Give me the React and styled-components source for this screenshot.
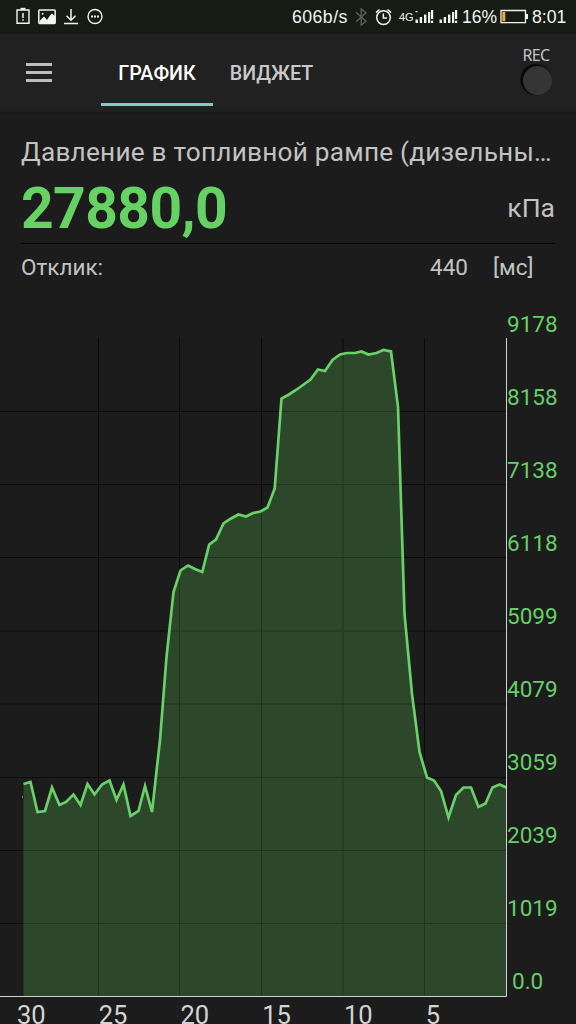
import React from "react";
import styled, { createGlobalStyle } from "styled-components";

const GlobalStyle = createGlobalStyle`
    * {
        box-sizing: border-box;
    }

    body {
        margin: 0;
        background: #1c1c1c;
        font-family: Roboto, "Noto Sans", sans-serif;
    }
`;

const Screen = styled.div`
    width: 576px;
    height: 1024px;
    overflow: hidden;
    display: flex;
    flex-direction: column;
    background: #1c1c1c;
`;

const StatusBar = styled.div`
    height: 34px;
    flex: none;
    display: flex;
    align-items: center;
    justify-content: space-between;
    padding: 0 9px 0 16px;
    background: #161c14;
`;

const StatusText = styled.span`
    width: ${(props) => props.$width}px;
    flex: none;
    font-family: "Liberation Sans", sans-serif;
    font-size: ${(props) => props.$size || 17}px;
    letter-spacing: ${(props) => props.$spacing || 0}px;
    line-height: 34px;
    white-space: nowrap;
    color: #f1f5ef;
`;

const StatusIcons = styled.svg`
    display: block;
    flex: none;
`;

const StatusGroup = styled.div`
    display: flex;
    align-items: center;
`;

const Header = styled.header`
    height: 78px;
    flex: none;
    display: flex;
    background: #212121;
    border-bottom: 1px solid #1e1e1e;
    box-shadow: 0 1px 3px #151515;
`;

const MenuButton = styled.button`
    width: 101px;
    border: 0;
    padding: 29px 0 0 26px;
    background: none;
    display: flex;
    flex-direction: column;
    gap: 5px;
`;

const MenuLine = styled.span`
    width: 26px;
    height: 3px;
    background: #bdbdbd;
`;

const Tab = styled.div`
    width: ${(props) => props.$width}px;
    height: 72px;
    padding-top: 2px;
    line-height: 75px;
    text-align: center;
    font-size: 19.7px;
    font-weight: 500;
    white-space: nowrap;
    color: ${(props) => (props.$active ? "#fff" : "#c9c9c9")};
    border-bottom: 3px solid ${(props) => (props.$active ? "#80cbc4" : "transparent")};
`;

const Record = styled.div`
    margin-left: auto;
    width: 80px;
    padding-top: 13px;
    display: flex;
    flex-direction: column;
    align-items: center;
`;

const RecordLabel = styled.span`
    font-family: "Noto Sans", sans-serif;
    font-size: 16px;
    line-height: 17px;
    letter-spacing: -0.7px;
    color: #c4c4c4;
`;

const RecordLamp = styled.span`
    width: 29px;
    height: 29px;
    margin: 2px 0 0 2px;
    border-radius: 50%;
    background: #353535;
    box-shadow: -1.5px -1px 1px 1px #070707;
`;

const Summary = styled.section`
    height: 226px;
    flex: none;
    padding: 22px 20px 0 21px;
    color: #c3c3c3;
`;

const Title = styled.div`
    height: 36px;
    font-size: 26.2px;
    line-height: 36px;
    letter-spacing: 0.23px;
    white-space: nowrap;
`;

const ValueRow = styled.div`
    height: 74px;
    margin-right: 1px;
    display: flex;
    justify-content: space-between;
    border-bottom: 1px solid #020202;
`;

const Value = styled.span`
    font-size: 57px;
    font-weight: 700;
    line-height: 78px;
    letter-spacing: -0.6px;
    color: #66d264;
`;

const Unit = styled.span`
    font-size: 26.5px;
    line-height: 75px;
`;

const ResponseRow = styled.div`
    display: grid;
    grid-template-columns: 409px 63px 1fr;
    font-size: 22.5px;
    line-height: 47px;
`;

const Chart = styled.section`
    display: grid;
    grid-template-columns: 507px 69px;
    grid-template-rows: 659px 27px;
`;

const Plot = styled.svg`
    display: block;
`;

const ValueAxis = styled.div`
    margin-top: -28px;
    display: flex;
    flex-direction: column;
`;

const ValueTick = styled.span`
    height: 73px;
    flex: none;
    padding-left: ${(props) => (props.$zero ? 5 : 0)}px;
    font-size: 22.5px;
    line-height: 28px;
    color: #66cf67;
`;

const TimeAxis = styled.div`
    display: flex;
    padding-left: 17px;
    height: 27px;
`;

const TimeTick = styled.span`
    width: 81.75px;
    flex: none;
    font-size: 25.5px;
    line-height: 36px;
    color: #d4d4d4;
`;

const points = [
    [23.5, 784], [30.5, 782], [37.5, 812], [45, 811], [52, 787.5],
    [59.5, 805], [66, 802], [73.5, 794.5], [80.5, 805], [87.5, 784],
    [94.5, 794.5], [102, 784.5], [109.5, 780.5], [116.5, 800], [123.5, 784.5],
    [130.5, 816], [138.5, 811], [145, 786], [152, 812], [160, 740],
    [166.5, 657], [173.5, 592], [180.5, 570.5], [188, 565.5], [195, 569],
    [202.3, 572], [209.2, 544.5], [216, 539.5], [223.5, 523.5], [231, 518.5],
    [238.5, 514.5], [246, 516.5], [253, 513], [260.5, 511.5], [267.5, 507.5],
    [274.7, 488.5], [281.5, 398.5], [289, 394.5], [296, 390], [303, 385],
    [310.5, 379.5], [318, 369.5], [325, 371], [332.5, 360], [340, 354.5],
    [347, 353], [355, 353], [361.5, 351.5], [368.5, 354.5], [376.5, 353],
    [383.5, 350], [391, 351.5], [398, 407], [404.5, 614], [412, 694],
    [419.5, 752], [427, 777.5], [434, 780.5], [441, 791], [448.5, 817.5],
    [456, 795], [463.5, 787.5], [471, 787.5], [478.5, 807], [485.5, 803.5],
    [492.5, 787.5], [499.5, 784.5], [506.5, 787.5],
];

const line = points.map((p) => p.join(",")).join(" ");

const rows = [411.5, 484.5, 557.5, 631, 704, 777.5, 850.5, 923.5];
const columns = [98.5, 179.5, 261.5, 343, 424.5];

const valueTicks = ["9178", "8158", "7138", "6118", "5099", "4079", "3059", "2039", "1019", "0.0"];
const timeTicks = ["30", "25", "20", "15", "10", "5"];

const NotificationIcons = () => (
    <StatusIcons width="90" height="34" viewBox="16 0 90 34" fill="none" stroke="#f1f5ef">
        <path d="M17 10H29V23.3H17Z" strokeWidth="1.4" />
        <path d="M20.5 8.8H25.5" strokeWidth="2" />
        <path d="M23 13V18M23 19.2V20.8" strokeWidth="1.5" />
        <rect x="38.8" y="10" width="16.4" height="13.4" rx="0.8" strokeWidth="1.5" />
        <path
            d="M39.5 21 44 16.5 47 20 50 15.5 52 13.5 55 16V23H39.5Z"
            fill="#f1f5ef"
            stroke="none"
        />
        <circle cx="42.6" cy="13.7" r="1" fill="#f1f5ef" stroke="none" />
        <path d="M71 9V20M66.5 15.8 71 20.3 75.5 15.8M64 23.5H78" strokeWidth="1.5" />
        <circle cx="95" cy="16.5" r="7" strokeWidth="1.4" />
        <path d="M91 16.5H93M94 16.5H96M97 16.5H99" strokeWidth="1.8" />
    </StatusIcons>
);

const RadioIcons = () => (
    <StatusIcons width="47" height="34" viewBox="352 0 47 34" fill="none">
        <path d="M356 12.2 366 21.3 361.2 25V9L366 12.8 356 21.8" stroke="#596057" strokeWidth="1.4" />
        <g stroke="#f1f5ef" strokeWidth="1.5">
            <circle cx="383.5" cy="17.6" r="6.8" />
            <path d="M383.3 13.5V18H387M376 12.6 379.5 9.5M387.5 9.5 391 12.6" />
        </g>
    </StatusIcons>
);

const SignalIcons = () => (
    <StatusIcons width="48" height="34" viewBox="414 0 48 34">
        <path
            d="M415.5 19.5h2.4V23h-2.4zM419.7 17h2.4v6h-2.4zM424 14.5h2.4V23h-2.4zM428 12h2.2v11H428zM431 10h2.2v9H431zM431 20.8h2.2V23H431zM415.5 11h2v1.3h-2z"
            fill="#f1f5ef"
        />
        <path
            d="M439.5 19.5h2.4V23h-2.4zM443.7 17h2.4v6h-2.4zM448 14.5h2.4V23H448zM452 12h2.2v11H452zM455 10h2.2v9H455zM455 20.8h2.2V23H455z"
            fill="#f1f5ef"
        />
    </StatusIcons>
);

const BatteryIcon = () => (
    <StatusIcons width="34" height="34" viewBox="498 0 34 34">
        <path d="M501 10.5H525.5V22.7H501Z" fill="none" stroke="#f1f5ef" strokeWidth="1.3" />
        <path d="M526 14H528V19H526Z" fill="#f1f5ef" />
        <path d="M502.3 12H505.3V21.2H502.3Z" fill="#f3a83b" />
    </StatusIcons>
);

const Graph = () => (
    <Plot width="507" height="659" viewBox="0 338 507 659">
        <g stroke="#0b0b0b" strokeWidth="1">
            {rows.map((y) => (
                <line key={y} x1="0" x2="507" y1={y} y2={y} />
            ))}
            {columns.map((x) => (
                <line key={x} x1={x} x2={x} y1="338" y2="996" />
            ))}
        </g>
        <polygon points={`23.5,996 ${line} 506.5,996`} fill="#2d472b" />
        <clipPath id="area">
            <polygon points={`23.5,996 ${line} 506.5,996`} />
        </clipPath>
        <g clipPath="url(#area)" stroke="#1f351e">
            {rows.map((y) => (
                <line key={y} x1="0" x2="507" y1={y} y2={y} />
            ))}
            {columns.map((x) => (
                <line key={x} x1={x} x2={x} y1="338" y2="996" />
            ))}
        </g>
        <path d="M22.5 796V798" stroke="#4c9a4b" />
        <polyline points={line} fill="none" stroke="#69d169" strokeWidth="2.7" />
        <path d="M0 996.5H506.5V338" fill="none" stroke="#cfd6cf" />
    </Plot>
);

const App = () => (
    <>
        <GlobalStyle />
        <Screen>
            <StatusBar>
                <NotificationIcons />
                <StatusGroup>
                    <StatusText $width={60} $size={17.7} $spacing={0.45}>606b/s</StatusText>
                    <RadioIcons />
                    <StatusText $width={15} $size={11}>4G</StatusText>
                    <SignalIcons />
                    <StatusText $width={36} $size={17.5}>16%</StatusText>
                    <BatteryIcon />
                    <StatusText $width={35} $size={17.7}>8:01</StatusText>
                </StatusGroup>
            </StatusBar>
            <Header>
                <MenuButton>
                    <MenuLine />
                    <MenuLine />
                    <MenuLine />
                </MenuButton>
                <Tab $width={112} $active>ГРАФИК</Tab>
                <Tab $width={117}>ВИДЖЕТ</Tab>
                <Record>
                    <RecordLabel>REC</RecordLabel>
                    <RecordLamp />
                </Record>
            </Header>
            <Summary>
                <Title>Давление в топливной рампе (дизельны…</Title>
                <ValueRow>
                    <Value>27880,0</Value>
                    <Unit>кПа</Unit>
                </ValueRow>
                <ResponseRow>
                    <span>Отклик:</span>
                    <span>440</span>
                    <span>[мс]</span>
                </ResponseRow>
            </Summary>
            <Chart>
                <Graph />
                <ValueAxis>
                    {valueTicks.map((tick) => (
                        <ValueTick key={tick} $zero={tick === "0.0"}>{tick}</ValueTick>
                    ))}
                </ValueAxis>
                <TimeAxis>
                    {timeTicks.map((tick) => (
                        <TimeTick key={tick}>{tick}</TimeTick>
                    ))}
                </TimeAxis>
            </Chart>
        </Screen>
    </>
);

export default App;
